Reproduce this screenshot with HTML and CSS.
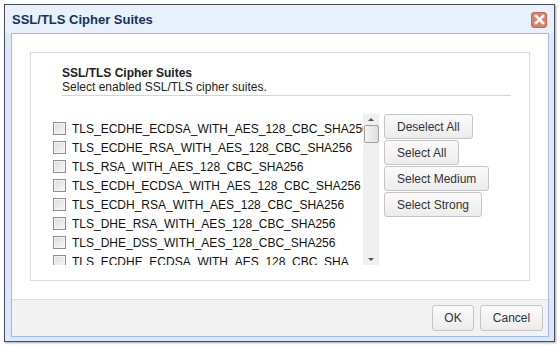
FILE: index.html
```html
<!DOCTYPE html>
<html>
<head>
<meta charset="utf-8">
<link rel="stylesheet" href="styles.css">
</head>
<body>
<div class="dialog">
  <div class="titlebar">
    <span class="title">SSL/TLS Cipher Suites</span>
    <span class="close"><svg width="11" height="11" viewBox="0 0 11 11"><path d="M2 2 L9 9 M9 2 L2 9" stroke="#fff" stroke-width="2.6" stroke-linecap="square"/></svg></span>
  </div>
  <div class="frame">
    <div class="content">
      <div class="panel">
        <div class="head">
          <div class="h1">SSL/TLS Cipher Suites</div>
          <div class="h2">Select enabled SSL/TLS cipher suites.</div>
        </div>
        <div class="body">
          <div class="listbox">
            <div class="list">
              <label class="row"><span class="cb"></span><span class="txt">TLS_ECDHE_ECDSA_WITH_AES_128_CBC_SHA256</span></label>
              <label class="row"><span class="cb"></span><span class="txt">TLS_ECDHE_RSA_WITH_AES_128_CBC_SHA256</span></label>
              <label class="row"><span class="cb"></span><span class="txt">TLS_RSA_WITH_AES_128_CBC_SHA256</span></label>
              <label class="row"><span class="cb"></span><span class="txt">TLS_ECDH_ECDSA_WITH_AES_128_CBC_SHA256</span></label>
              <label class="row"><span class="cb"></span><span class="txt">TLS_ECDH_RSA_WITH_AES_128_CBC_SHA256</span></label>
              <label class="row"><span class="cb"></span><span class="txt">TLS_DHE_RSA_WITH_AES_128_CBC_SHA256</span></label>
              <label class="row"><span class="cb"></span><span class="txt">TLS_DHE_DSS_WITH_AES_128_CBC_SHA256</span></label>
              <label class="row"><span class="cb"></span><span class="txt">TLS_ECDHE_ECDSA_WITH_AES_128_CBC_SHA</span></label>
            </div>
            <div class="scrollbar">
              <span class="arrow up"></span>
              <span class="thumb"></span>
              <span class="track"></span>
              <span class="arrow down"></span>
            </div>
          </div>
          <div class="actions">
            <button class="btn">Deselect All</button>
            <button class="btn">Select All</button>
            <button class="btn">Select Medium</button>
            <button class="btn">Select Strong</button>
          </div>
        </div>
      </div>
    </div>
    <div class="footer">
      <button class="btn fbtn ok">OK</button>
      <button class="btn fbtn cancel">Cancel</button>
    </div>
  </div>
</div>
</body>
</html>
```
FILE: styles.css
```css
* { box-sizing: border-box; }
html, body { margin: 0; padding: 0; background: #fff; }
body { font-family: "Liberation Sans", Arial, sans-serif; font-size: 12px; color: #111; width: 560px; height: 348px; overflow: hidden; }
.dialog {
  margin: 4px 0 0 4px;
  width: 551px;
  height: 338px;
  border: 1px solid #4a4f57;
  background: #dce8fa;
  box-shadow: 1px 1px 2px rgba(0,0,0,0.35);
  display: flex;
  flex-direction: column;
  padding: 0 5px 4px 6px;
}
.titlebar {
  height: 28px;
  display: flex;
  align-items: center;
  justify-content: space-between;
  background: #e8f0fc;
  margin: 0 -5px 0 -6px;
  padding: 0 7px 0 7px;
}
.title { font-weight: bold; font-size: 13px; color: #15325f; padding-top: 1px; }
.close {
  width: 16px; height: 16px;
  border-radius: 3px;
  background: #d9826a;
  border: 1px solid #c0684f;
  display: flex; align-items: center; justify-content: center;
  margin-top: 1px;
}
.frame {
  flex: 1;
  border: 1px solid #9dbde6;
  background: #fff;
  display: flex;
  flex-direction: column;
}
.content { flex: 1; padding: 18px 18px 0 18px; }
.panel {
  border: 1px solid #dcdcdc;
  height: 229px;
  padding: 13px 17px 0 31px;
}
.head { border-bottom: 1px solid #d4d4d4; width: 449px; padding-bottom: 1px; }
.h1 { font-weight: bold; font-size: 12px; color: #222; line-height: 14px; }
.h2 { font-size: 12px; color: #222; line-height: 14px; }
.body { display: flex; margin-top: 18px; }
.listbox { display: flex; height: 151px; overflow: hidden; margin-left: -9px; }
.list { width: 310px; overflow: hidden; padding-top: 5px; }
.row { display: flex; align-items: center; height: 19px; white-space: nowrap; }
.cb {
  width: 13px; height: 13px; flex: none;
  border: 1px solid #8f8f8f;
  background: linear-gradient(135deg, #dcdcdc, #f6f6f6);
  box-shadow: inset 0 0 0 1px #f4f4f4;
  margin-right: 6px;
}
.txt { font-size: 12px; color: #111; }
.scrollbar {
  width: 16px;
  background: #f0f0f0;
  display: flex;
  flex-direction: column;
  align-items: center;
}
.arrow { width: 16px; height: 11px; flex: none; position: relative; }
.arrow::after {
  content: ""; position: absolute; left: 5px; width: 0; height: 0;
  border-left: 3px solid transparent; border-right: 3px solid transparent;
}
.up::after { top: 4px; border-bottom: 3px solid #555; }
.down::after { top: 4px; border-top: 3px solid #555; }
.thumb {
  width: 15px; height: 18px; flex: none;
  border: 1px solid #a0a0a0; border-radius: 2px;
  background: linear-gradient(to right, #f4f4f4, #dedede);
}
.track { flex: 1; }
.actions { display: flex; flex-direction: column; align-items: flex-start; gap: 1px; margin-left: 5px; }
.btn {
  font-family: "Liberation Sans", Arial, sans-serif;
  font-size: 12px;
  color: #333;
  height: 25px;
  padding: 0 12px;
  border: 1px solid #c5c5c5;
  border-radius: 3px;
  background: linear-gradient(#fafafa, #ececec);
  margin: 0;
}
.footer {
  height: 37px;
  border-top: 1px solid #dedede;
  background: #f2f2f2;
  display: flex;
  justify-content: flex-end;
  align-items: center;
  gap: 6px;
  padding: 0 5px 0 0;
}
.fbtn { height: 26px; padding: 0; }
.ok { width: 42px; }
.cancel { width: 63px; }
```
